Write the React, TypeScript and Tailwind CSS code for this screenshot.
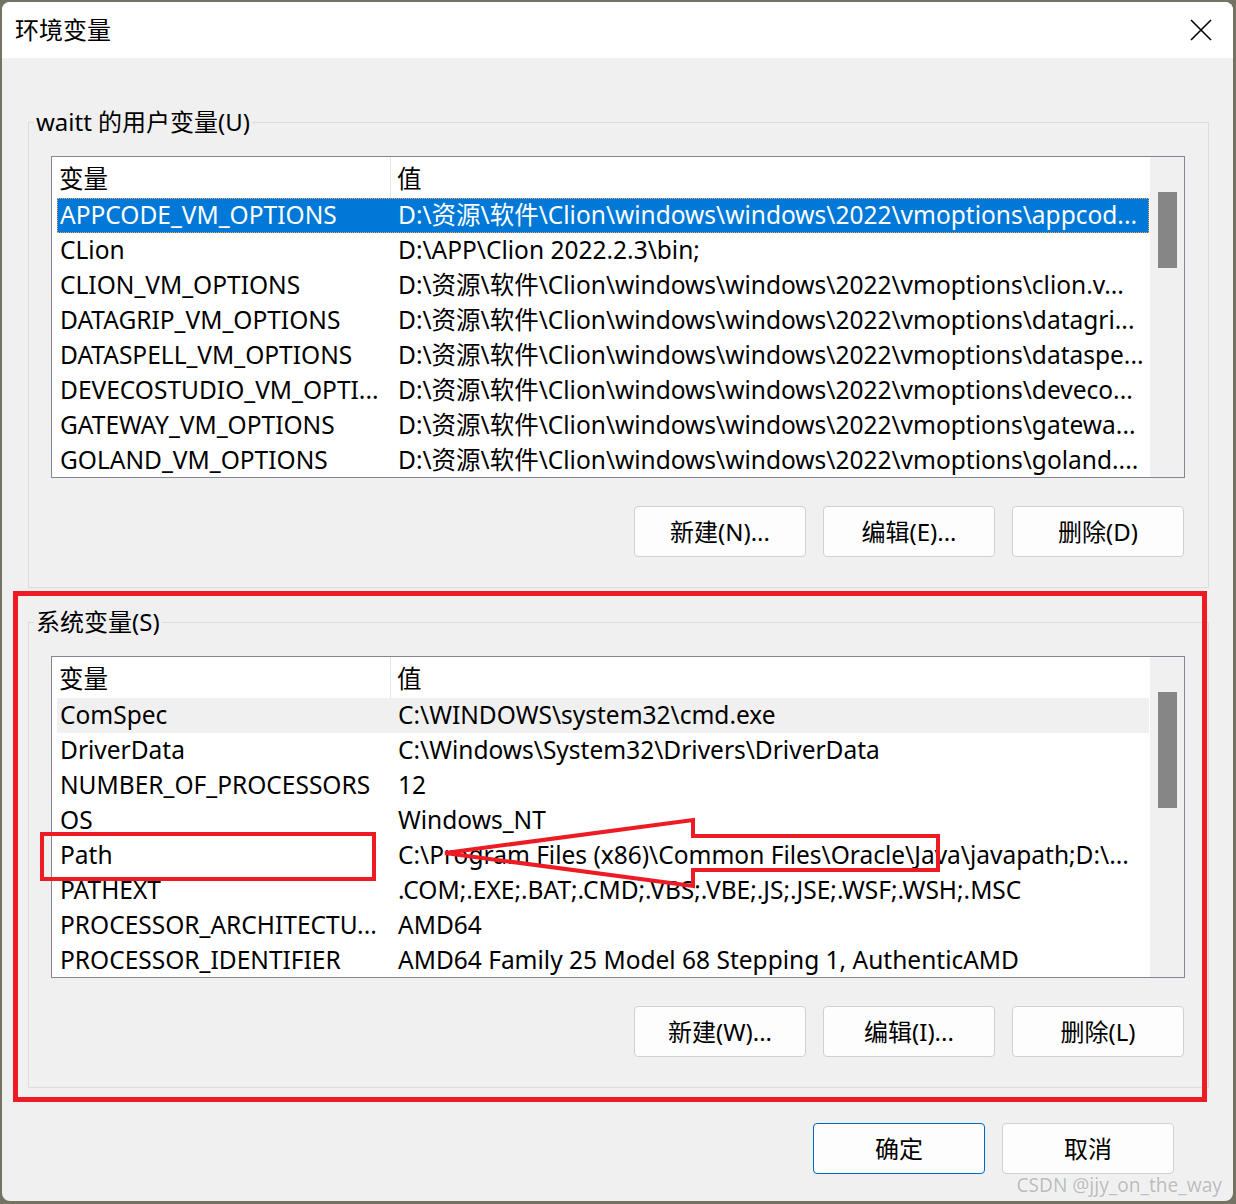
import React from 'react';

type Row = [string, string];

const userVars: Row[] = [
  ['APPCODE_VM_OPTIONS', 'D:\\资源\\软件\\Clion\\windows\\windows\\2022\\vmoptions\\appcod...'],
  ['CLion', 'D:\\APP\\Clion 2022.2.3\\bin;'],
  ['CLION_VM_OPTIONS', 'D:\\资源\\软件\\Clion\\windows\\windows\\2022\\vmoptions\\clion.v...'],
  ['DATAGRIP_VM_OPTIONS', 'D:\\资源\\软件\\Clion\\windows\\windows\\2022\\vmoptions\\datagri...'],
  ['DATASPELL_VM_OPTIONS', 'D:\\资源\\软件\\Clion\\windows\\windows\\2022\\vmoptions\\dataspe...'],
  ['DEVECOSTUDIO_VM_OPTI...', 'D:\\资源\\软件\\Clion\\windows\\windows\\2022\\vmoptions\\deveco...'],
  ['GATEWAY_VM_OPTIONS', 'D:\\资源\\软件\\Clion\\windows\\windows\\2022\\vmoptions\\gatewa...'],
  ['GOLAND_VM_OPTIONS', 'D:\\资源\\软件\\Clion\\windows\\windows\\2022\\vmoptions\\goland....'],
];

const sysVars: Row[] = [
  ['ComSpec', 'C:\\WINDOWS\\system32\\cmd.exe'],
  ['DriverData', 'C:\\Windows\\System32\\Drivers\\DriverData'],
  ['NUMBER_OF_PROCESSORS', '12'],
  ['OS', 'Windows_NT'],
  ['Path', 'C:\\Program Files (x86)\\Common Files\\Oracle\\Java\\javapath;D:\\...'],
  ['PATHEXT', '.COM;.EXE;.BAT;.CMD;.VBS;.VBE;.JS;.JSE;.WSF;.WSH;.MSC'],
  ['PROCESSOR_ARCHITECTU...', 'AMD64'],
  ['PROCESSOR_IDENTIFIER', 'AMD64 Family 25 Model 68 Stepping 1, AuthenticAMD'],
];

const VarList: React.FC<{ rows: Row[]; selected: 'active' | 'inactive'; thumbH: string }> = ({
  rows,
  selected,
  thumbH,
}) => (
  <div className="flex h-[322px] border border-[#828790] bg-white text-[24.5px]">
    <div className="min-w-0 flex-1 pl-[5px]">
      {/* Header */}
      <div className="flex h-[41px] items-center">
        <div className="flex h-full w-[334px] items-center border-r border-[#e5e5e5] pl-[2px] pt-[3px]">变量</div>
        <div className="pl-[6px] pt-[3px]">值</div>
      </div>
      {rows.map(([name, value], i) => {
        const isSel = i === 0;
        const rowCls = isSel
          ? selected === 'active'
            ? 'bg-[#0078d7] text-white outline outline-1 outline-dotted outline-[#e8a45c] -outline-offset-1'
            : 'bg-[#f0f0f0] text-black'
          : 'text-black';
        return (
          <div key={name} className={`flex h-[35px] items-center ${rowCls}`}>
            <div className="w-[334px] shrink-0 overflow-hidden whitespace-nowrap pl-[3px]">{name}</div>
            <div className="min-w-0 flex-1 overflow-hidden text-ellipsis whitespace-nowrap pl-[7px]">{value}</div>
          </div>
        );
      })}
    </div>
    {/* Scrollbar */}
    <div className="flex w-[35px] justify-center border-l border-white bg-[#f0f0f0] pt-[35px]">
      <div className={`w-[19px] bg-[#868686] ${thumbH}`} />
    </div>
  </div>
);

const Btn: React.FC<{ children: React.ReactNode; primary?: boolean }> = ({ children, primary }) => (
  <button
    className={`flex h-[51px] w-[172px] items-center justify-center rounded-[4px] border bg-[#fdfdfd] text-[24px] text-black ${
      primary ? 'border-[#0067c0]' : 'border-[#d0d0d0]'
    }`}
  >
    {children}
  </button>
);

const App: React.FC = () => {
  return (
    <div className="relative h-[1204px] w-[1236px] overflow-hidden bg-[#747363] pl-[2px] pt-[2px] font-['Noto_Sans','Noto_Sans_CJK_SC',sans-serif] text-[24px] text-black">
      <div className="flex h-[1199px] w-[1231px] flex-col overflow-hidden rounded-[8px] bg-[#f0f0f0]">
        {/* Title bar */}
        <div className="flex h-[56px] shrink-0 items-center justify-between bg-white pl-[13px] pr-[21px]">
          <span className="text-[24px]">环境变量</span>
          <svg width="22" height="22" viewBox="0 0 22 22" className="text-black">
            <path d="M1 1L21 21M21 1L1 21" stroke="currentColor" strokeWidth="1.6" />
          </svg>
        </div>

        {/* Body */}
        <div className="flex flex-1 flex-col pl-[26px] pr-[24px] pt-[49px]">
          <fieldset className="border border-[#dcdcdc] pb-[30px] pl-[22px] pr-[23px] pt-[19px]">
            <legend className="-ml-[17px] px-[2px] leading-[30px]">waitt 的用户变量(U)</legend>
            <VarList rows={userVars} selected="active" thumbH="h-[76px]" />
            <div className="mt-[28px] flex justify-end gap-[17px] pr-[1px]">
              <Btn>新建(N)...</Btn>
              <Btn>编辑(E)...</Btn>
              <Btn>删除(D)</Btn>
            </div>
          </fieldset>

          <fieldset className="mt-[19px] border border-[#dcdcdc] pb-[30px] pl-[22px] pr-[23px] pt-[19px]">
            <legend className="-ml-[17px] px-[2px] leading-[30px]">系统变量(S)</legend>
            <VarList rows={sysVars} selected="inactive" thumbH="h-[116px]" />
            <div className="mt-[28px] flex justify-end gap-[17px] pr-[1px]">
              <Btn>新建(W)...</Btn>
              <Btn>编辑(I)...</Btn>
              <Btn>删除(L)</Btn>
            </div>
          </fieldset>

          <div className="mt-[35px] flex justify-end gap-[17px] pr-[35px]">
            <Btn primary>确定</Btn>
            <Btn>取消</Btn>
          </div>
        </div>
      </div>

      {/* Watermark */}
      <div className="pointer-events-none absolute bottom-[9px] right-[14px] text-[19px] leading-none text-[#bdbdbd] [text-shadow:0_0_2px_#ffffff]">
        CSDN @jjy_on_the_way
      </div>

      {/* Annotations drawn over the screenshot */}
      <svg className="pointer-events-none absolute left-0 top-0" width="1236" height="1204" viewBox="0 0 1236 1204">
        <rect x="15.5" y="593.5" width="1189" height="506" fill="none" stroke="#ed1c24" strokeWidth="5" />
        <rect x="42" y="834" width="332" height="45" fill="none" stroke="#ed1c24" strokeWidth="4" />
        <path
          d="M445 853 L693 820 L693 836 L938 836 L938 870 L693 870 L693 886 Z"
          fill="none"
          stroke="#ed1c24"
          strokeWidth="4"
          strokeLinejoin="miter"
        />
      </svg>
    </div>
  );
};

export default App;
